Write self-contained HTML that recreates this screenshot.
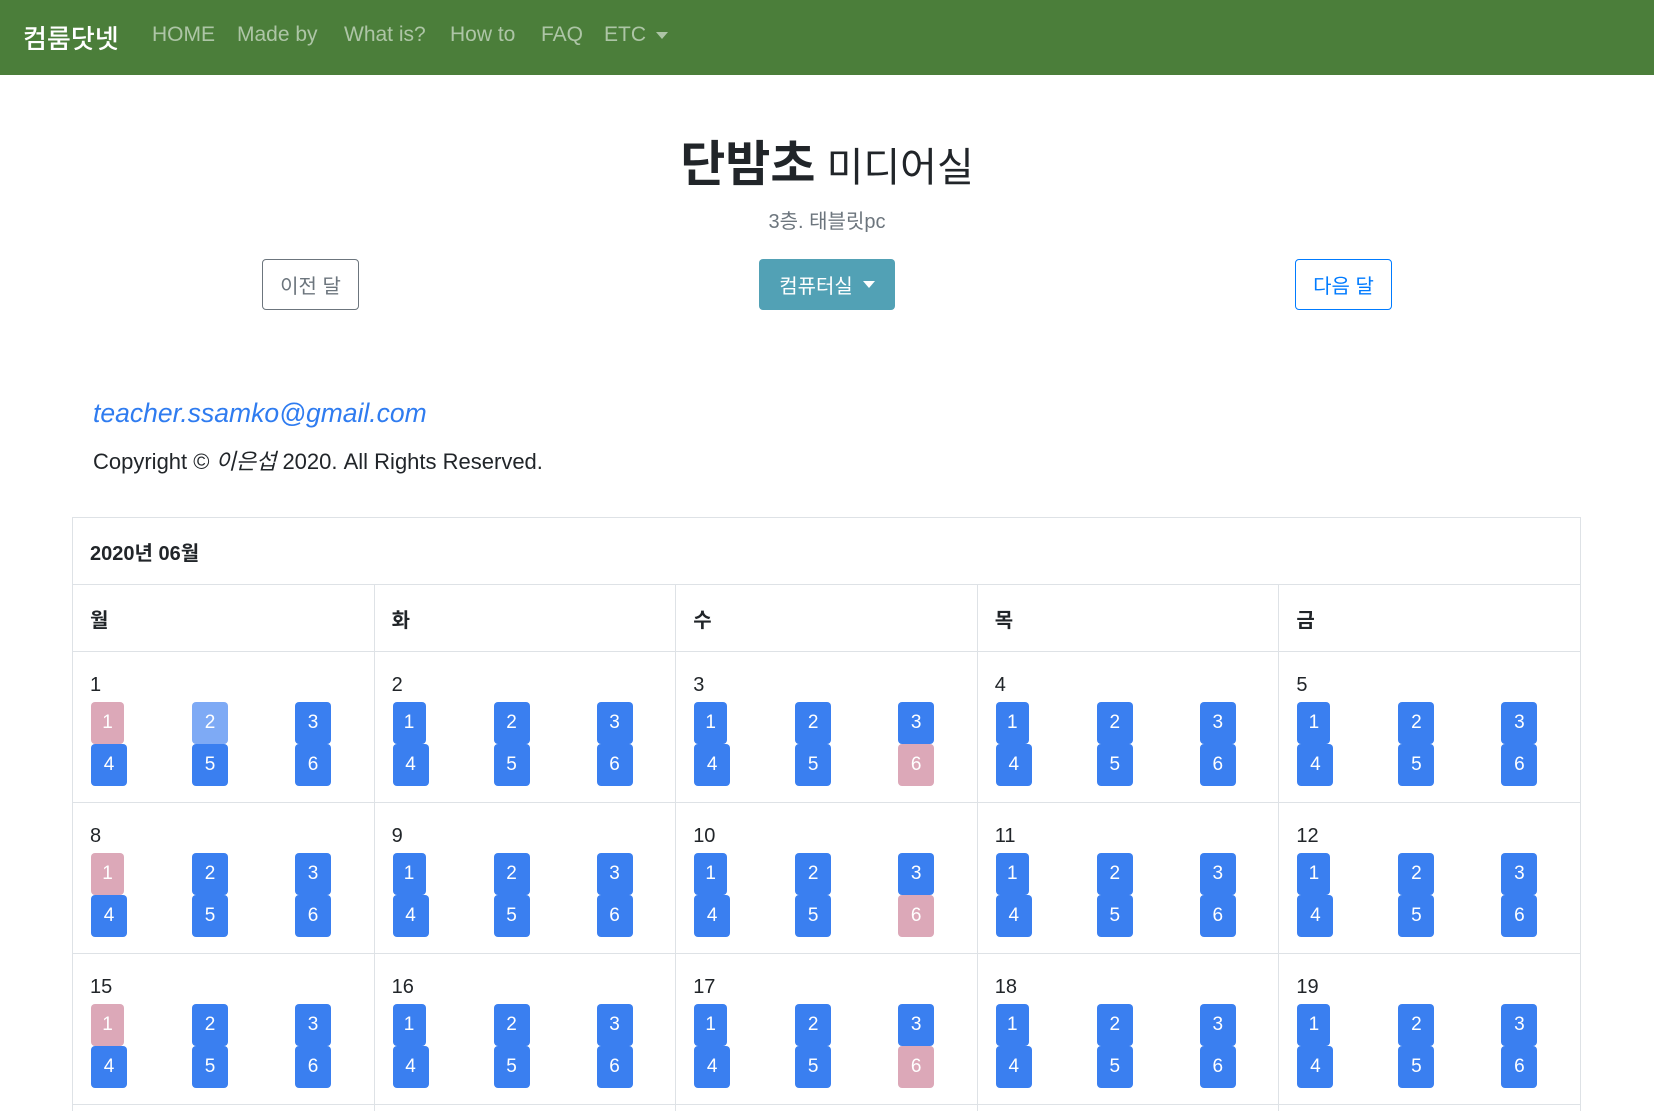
<!DOCTYPE html>
<html style="overflow:hidden;height:1112px"><head><meta charset="utf-8"><style>
*{box-sizing:border-box;margin:0;padding:0}
body{width:1654px;height:1112px;overflow:hidden;background:#fff;font-family:"Liberation Sans","Noto Sans CJK KR",sans-serif;color:#212529;position:relative}
.nav{position:absolute;left:0;top:0;width:1654px;height:75px;background:#4b7e3a}
.nav span{position:absolute;top:23px;font-size:21px;color:rgba(255,255,255,.55)}
.brand{color:#fff!important;font-size:26px!important;top:19px!important;font-weight:500}
.caret{display:inline-block;width:0;height:0;border-left:6px solid transparent;border-right:6px solid transparent;border-top:7px solid rgba(255,255,255,.55);vertical-align:middle;margin-left:10px}
.abs{position:absolute}
.btn{position:absolute;top:259px;height:51px;border-radius:4px;font-size:20px;display:flex;align-items:center;justify-content:center}
table{position:absolute;left:72px;top:517px;width:1509px;border-collapse:collapse}
td{border:1px solid #dee2e6;vertical-align:top;position:relative}
.hd td{height:67px;padding:0 17px;font-weight:bold;font-size:20px;vertical-align:middle}
.wk td{height:151px;width:302px}
.last td{height:6px;border-bottom:none}
.d{position:absolute;left:17px;top:22px;font-size:20px}
.b{position:absolute;width:36px;height:42px;background:#3a7ff0;color:#fff;border-radius:4px;font-size:19px;display:flex;align-items:center;justify-content:center}
.p{background:#dca8b8}.l{background:#7eaaf5}
</style></head><body>
<div class="nav">
<span class="brand" style="left:23px">컴룸닷넷</span>
<span style="left:152px">HOME</span>
<span style="left:237px">Made by</span>
<span style="left:344px">What is?</span>
<span style="left:450px">How to</span>
<span style="left:541px">FAQ</span>
<span style="left:604px">ETC<i class="caret"></i></span>
</div>
<div class="abs" style="left:0;width:1654px;top:125px;text-align:center;font-size:40px"><b style="font-size:49px">단밤초</b> 미디어실</div>
<div class="abs" style="left:0;width:1654px;top:205px;text-align:center;font-size:20px;color:#6c757d">3층. 태블릿pc</div>
<div class="btn" style="left:262px;width:97px;border:1px solid #6c757d;color:#6c757d">이전 달</div>
<div class="btn" style="left:759px;width:136px;background:#52a1b5;color:#fff">컴퓨터실<i class="caret" style="border-top-color:#fff"></i></div>
<div class="btn" style="left:1295px;width:97px;border:1px solid #007bff;color:#007bff">다음 달</div>
<div class="abs" style="left:93px;top:398px;font-size:26.5px;font-style:italic;color:#2f7cf0">teacher.ssamko@gmail.com</div>
<div class="abs" style="left:93px;top:444px;font-size:22px">Copyright © <i>이은섭</i> 2020. All Rights Reserved.</div>
<table>
<tr class="hd"><td colspan="5">2020년 06월</td></tr>
<tr class="hd"><td>월</td><td>화</td><td>수</td><td>목</td><td>금</td></tr>
<tr class="wk" id="r1"></tr><tr class="wk" id="r2"></tr><tr class="wk" id="r3"></tr><tr class="last"><td></td><td></td><td></td><td></td><td></td></tr>
</table>
<script>
const days=[[1,2,3,4,5],[8,9,10,11,12],[15,16,17,18,19]];
const xs=[18,119,222];
days.forEach((w,ri)=>{let h='';w.forEach((d,ci)=>{let c='<div class="d">'+d+'</div>';
for(let k=1;k<=6;k++){let col=(k-1)%3,row=k>3?1:0;let cls='b';
if(ci==0&&k==1)cls+=' p';if(ci==2&&k==6)cls+=' p';if(ri==0&&ci==0&&k==2)cls+=' l';
let w=(k==1)?33:36;
c+='<div class="'+cls+'" style="left:'+xs[col]+'px;top:'+(50+row*42)+'px;width:'+w+'px">'+k+'</div>';}
h+='<td>'+c+'</td>';});document.getElementById('r'+(ri+1)).innerHTML=h;});
</script>
</body></html>
